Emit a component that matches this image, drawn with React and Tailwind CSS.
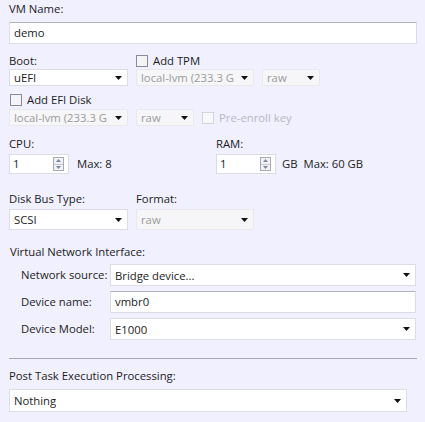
import React from 'react'

const Arrow = () => (
  <svg width="7" height="4" viewBox="0 0 7 4" className="shrink-0">
    <path d="M0 0h7L3.5 4z" fill="#111" />
  </svg>
)

function Select({ value, className = '', disabled }) {
  return (
    <div
      className={`flex items-center justify-between gap-[3px] pl-[4px] pr-[5px] border ${
        disabled ? 'bg-[#f6f6f8] border-[#e8e8ee] text-[#9a9a9a]' : 'bg-white border-[#dcdce4] text-[#1c1c1c]'
      } ${className}`}
    >
      <span className="overflow-hidden whitespace-nowrap leading-[15px]">{value}</span>
      <Arrow />
    </div>
  )
}

function TextInput({ value, className = '' }) {
  return (
    <div className={`flex items-center pl-[4px] bg-white border border-[#dcdce4] border-t-[#b4b4bc] ${className}`}>
      <span className="leading-none">{value}</span>
    </div>
  )
}

function Spinner({ value }) {
  return (
    <div className="flex items-center w-[60px] h-[20px] bg-white border border-[#dcdce4] pl-[3px] pr-[4px]">
      <span className="flex-1 leading-none">{value}</span>
      <div className="flex flex-col w-[11px] h-[14px] border border-[#a9a9b4] bg-[#f2f2f6]">
        <div className="flex-1 flex items-center justify-center border-b border-[#c8c8d0]">
          <svg width="5" height="3" viewBox="0 0 5 3"><path d="M0 3h5L2.5 0z" fill="#7a86a0" /></svg>
        </div>
        <div className="flex-1 flex items-center justify-center">
          <svg width="5" height="3" viewBox="0 0 5 3"><path d="M0 0h5L2.5 3z" fill="#7a86a0" /></svg>
        </div>
      </div>
    </div>
  )
}

function Checkbox({ label, disabled }) {
  return (
    <div className={`flex items-center gap-[5px] whitespace-nowrap ${disabled ? 'text-[#b8b8c0]' : ''}`}>
      <div
        className={`w-[12px] h-[12px] border ${
          disabled ? 'border-[#d4d4dc] bg-[#f8f8fa]' : 'border-[#8a8a94] bg-[#f4f4f6]'
        }`}
      />
      <span className="leading-none">{label}</span>
    </div>
  )
}

export default function App() {
  return (
    <div
      className="w-[425px] h-[422px] bg-[#f0f0ff] text-[#1c1c1c] text-[11.3px] overflow-hidden pl-[9px]"
      style={{ fontFamily: '"Open Sans", "Noto Sans", sans-serif' }}
    >
      <div className="h-[22px] pt-[3px] leading-none">VM Name:</div>
      <TextInput value="demo" className="w-[408px] h-[22px]" />

      <div className="flex mt-[10px] h-[14px] items-center">
        <div className="w-[127px] leading-none">Boot:</div>
        <Checkbox label="Add TPM" />
      </div>
      <div className="flex mt-[1px] gap-[8px]">
        <Select value="uEFI" className="w-[119px] h-[17px]" />
        <Select value="local-lvm (233.3 G" disabled className="w-[118px] h-[17px]" />
        <Select value="raw" disabled className="w-[58px] h-[17px]" />
      </div>

      <div className="mt-[7px] h-[14px] pl-[1px] flex items-center">
        <Checkbox label="Add EFI Disk" />
      </div>
      <div className="flex mt-[2px] gap-[8px] items-center">
        <Select value="local-lvm (233.3 G" disabled className="w-[119px] h-[17px]" />
        <Select value="raw" disabled className="w-[58px] h-[17px]" />
        <Checkbox label="Pre-enroll key" disabled />
      </div>

      <div className="flex mt-[10px]">
        <div className="w-[207px]">
          <div className="h-[15px] leading-none pt-[2px]">CPU:</div>
          <div className="flex items-center gap-[8px] mt-[3px]">
            <Spinner value="1" />
            <span className="leading-none">Max: 8</span>
          </div>
        </div>
        <div>
          <div className="h-[15px] leading-none pt-[2px]">RAM:</div>
          <div className="flex items-center gap-[6px] mt-[3px]">
            <Spinner value="1" />
            <span className="leading-none">GB</span>
            <span className="leading-none">Max: 60 GB</span>
          </div>
        </div>
      </div>

      <div className="flex mt-[16px] h-[18px] items-center">
        <div className="w-[127px] leading-none">Disk Bus Type:</div>
        <div className="leading-none">Format:</div>
      </div>
      <div className="flex gap-[8px] mt-[1px]">
        <Select value="SCSI" className="w-[119px] h-[21px]" />
        <Select value="raw" disabled className="w-[118px] h-[21px]" />
      </div>

      <div className="mt-[16px] h-[16px] leading-none pl-[1px]">Virtual Network Interface:</div>
      <div className="mt-[2px] pl-[12px] flex flex-col gap-[5px]">
        {[
          ['Network source:', 'Bridge device...', true],
          ['Device name:', 'vmbr0', false],
          ['Device Model:', 'E1000', true],
        ].map(([label, value, sel]) => (
          <div key={label} className="flex items-center">
            <div className="w-[89px] leading-none whitespace-nowrap">{label}</div>
            {sel ? (
              <Select value={value} className="w-[306px] h-[22px]" />
            ) : (
              <TextInput value={value} className="w-[306px] h-[22px]" />
            )}
          </div>
        ))}
      </div>

      <div className="mt-[18px] w-[408px] h-px bg-[#a8a8b0]" />
      <div className="mt-[11px] h-[18px] leading-none">Post Task Execution Processing:</div>
      <Select value="Nothing" className="w-[398px] h-[23px] mt-[1px]" />
    </div>
  )
}
